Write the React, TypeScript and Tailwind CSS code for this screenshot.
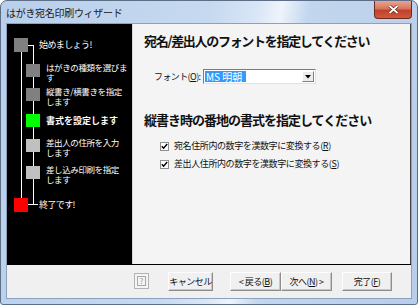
const jp = "font-['Noto_Sans_CJK_JP','Noto_Sans',sans-serif]";

const steps = [
  { lines: ['はがきの種類を選びま', 'す'], color: 'bg-[#808080]', mt: 'mt-[12px]' },
  { lines: ['縦書き/横書きを指定', 'します'], color: 'bg-[#808080]', mt: 'mt-[10px]' },
  { lines: ['書式を設定します'], color: 'bg-[#00ff00]', mt: 'mt-[12px]', current: true },
  { lines: ['差出人の住所を入力', 'します'], color: 'bg-[#c0c0c0]', mt: 'mt-[11px]' },
  { lines: ['差し込み印刷を指定', 'します'], color: 'bg-[#c0c0c0]', mt: 'mt-[13px]' },
];

function StepTree() {
  return (
    <div className="relative w-[125px] shrink-0 bg-black text-white">
      {/* connector lines */}
      <div className="absolute left-[14px] top-[28px] h-[146px] w-px bg-white" />
      <div className="absolute left-[21px] top-[21px] h-px w-[6px] bg-white" />
      <div className="absolute left-[26px] top-[21px] h-[160px] w-px bg-white" />
      <div className="absolute left-[21px] top-[180px] h-px w-[10px] bg-white" />

      <div className="relative flex flex-col pt-[14px]">
        <div className="flex h-[14px] items-center pl-[7px]">
          <div className="h-[14px] w-[14px] bg-[#808080]" />
          <span className="ml-[11px] text-[9px] leading-[10px] tracking-[-0.6px]">始めましょう!</span>
        </div>
        {steps.map((s, i) => (
          <div key={i} className={`flex h-[14px] items-start pl-[19px] ${s.mt}`}>
            <div className={`h-[13px] w-[14px] shrink-0 ${s.color}`} />
            <div
              className={`ml-[6px] whitespace-nowrap text-[8.5px] leading-[10px] ${
                s.current ? 'mt-[2px] text-[9px] font-bold tracking-[0px]' : '-mt-[2px] tracking-[-0.4px]'
              }`}
            >
              {s.lines.map((l) => (
                <div key={l}>{l}</div>
              ))}
            </div>
          </div>
        ))}
        <div className="mt-[18px] flex h-[14px] items-center pl-[7px]">
          <div className="h-[14px] w-[14px] bg-[#ff0000]" />
          <span className="ml-[11px] text-[9px] leading-[10px] tracking-[-0.6px]">終了です!</span>
        </div>
      </div>
    </div>
  );
}

function Check({ label }: { label: React.ReactNode }) {
  return (
    <div className="flex h-[18px] items-center pl-[27px]">
      <div className="flex h-[9px] w-[9px] items-center justify-center border border-[#8f8f8f] bg-white">
        <svg width="7" height="7" viewBox="0 0 7 7">
          <path d="M0.8 3.2 L2.6 5.2 L6.2 1" fill="none" stroke="#000" strokeWidth="1.4" />
        </svg>
      </div>
      <span className="ml-[5px] text-[9px] leading-[10px] tracking-[-0.4px] text-[#111]">{label}</span>
    </div>
  );
}

function Btn({ children, w }: { children: React.ReactNode; w: string }) {
  return (
    <button
      className={`flex h-[19px] ${w} items-center justify-center whitespace-nowrap border border-t-[#fdfdfd] border-l-[#fdfdfd] border-r-[#8c8c8c] border-b-[#8c8c8c] bg-[#f0f0f0] px-0 text-[9px] leading-none tracking-[-0.5px] text-[#111] shadow-[inset_-1px_-1px_0_#c8c8c8]`}
    >
      {children}
    </button>
  );
}

export default function App() {
  return (
    <div
      className={`${jp} relative h-[305px] w-[418px] overflow-hidden rounded-t-[7px] rounded-b-[3px] border border-[#5c6f86] bg-[linear-gradient(100deg,#b9cfeb_0%,#c6d9f0_45%,#d9e6f6_55%,#eef4fb_60%,#c2d6ee_66%,#b8cdea_100%)]`}
    >
      {/* title bar */}
      <div className="flex h-[22px] items-center pl-[5px] text-[10px] tracking-[-0.3px] text-[#1a1a1a]">
        はがき宛名印刷ウィザード
      </div>
      <div className="absolute right-[5px] top-0 flex h-[18px] w-[38px] items-center justify-center rounded-b-[4px] border border-t-0 border-[#6e2a1f] bg-[linear-gradient(180deg,#e6a593_0%,#d7765f_45%,#c0422a_55%,#cf5a3c_100%)]">
        <svg width="11" height="9" viewBox="0 0 11 9">
          <path d="M1.5 1 L9.5 8 M9.5 1 L1.5 8" stroke="#5a2016" strokeWidth="3.2" />
          <path d="M1.5 1 L9.5 8 M9.5 1 L1.5 8" stroke="#fff" strokeWidth="1.8" />
        </svg>
      </div>

      {/* client area */}
      <div className="mx-[5px] flex h-[276px] flex-col border border-[#8ba2bf] bg-[#f0f0f0]">
        <div className="flex h-[241px] border-b border-black">
          <StepTree />
          <div className="flex-1 border-l border-[#d8d8d8] border-r border-r-[#444] bg-[#f4f4f4]">
            <div className="pl-[11px] pt-[7px] text-[13px] font-bold leading-[20px] tracking-[-1.3px] text-[#111]">
              宛名/差出人のフォントを指定してください
            </div>
            <div className="mt-[18px] flex h-[15px] items-center pl-[21px]">
              <span className="w-[49px] text-[9px] tracking-[-0.6px] text-[#111]">フォント(<u>O</u>):</span>
              <div className="flex h-[15px] w-[113px] items-center border border-t-[#7a7a7a] border-l-[#7a7a7a] border-b-[#e2e2e2] border-r-[#e2e2e2] bg-white pl-[1px]">
                <span className="bg-[#3399ff] pr-[4px] pl-[1px] text-[10px] leading-[11px] text-white">MS 明朝</span>
                <div className="ml-auto mr-px flex h-[11px] w-[12px] items-center justify-center border border-t-white border-l-white border-b-[#808080] border-r-[#808080] bg-[#ececec]">
                  <svg width="6" height="4" viewBox="0 0 6 4">
                    <path d="M0 0 H6 L3 3.5 Z" fill="#000" />
                  </svg>
                </div>
              </div>
            </div>
            <div className="mt-[26px] pl-[11px] text-[13px] font-bold leading-[20px] tracking-[-1px] text-[#111]">
              縦書き時の番地の書式を指定してください
            </div>
            <div className="mt-[7px] flex flex-col">
              <Check label={<>宛名住所内の数字を漢数字に変換する(<u>R</u>)</>} />
              <Check label={<>差出人住所内の数字を漢数字に変換する(<u>S</u>)</>} />
            </div>
          </div>
        </div>

        {/* buttons */}
        <div className="flex flex-1 items-center pl-[127px] pb-[1px]">
          <div className="flex h-[16px] w-[15px] items-center justify-center border border-[#b4b4b4] bg-[#f4f4f4]">
            <div className="flex h-[10px] w-[9px] items-center justify-center border border-[#a8a8a8] text-[8px] leading-none text-[#9a9a9a]">
              ?
            </div>
          </div>
          <div className="ml-[19px]">
            <Btn w="w-[45px]">キャンセル</Btn>
          </div>
          <div className="ml-[17px] flex">
            <Btn w="w-[51px]">
              &lt;&nbsp;戻る(<u>B</u>)
            </Btn>
            <Btn w="w-[51px]">
              次へ(<u>N</u>)&nbsp;&gt;
            </Btn>
          </div>
          <div className="ml-[10px]">
            <Btn w="w-[50px]">
              完了(<u>F</u>)
            </Btn>
          </div>
        </div>
      </div>
    </div>
  );
}
